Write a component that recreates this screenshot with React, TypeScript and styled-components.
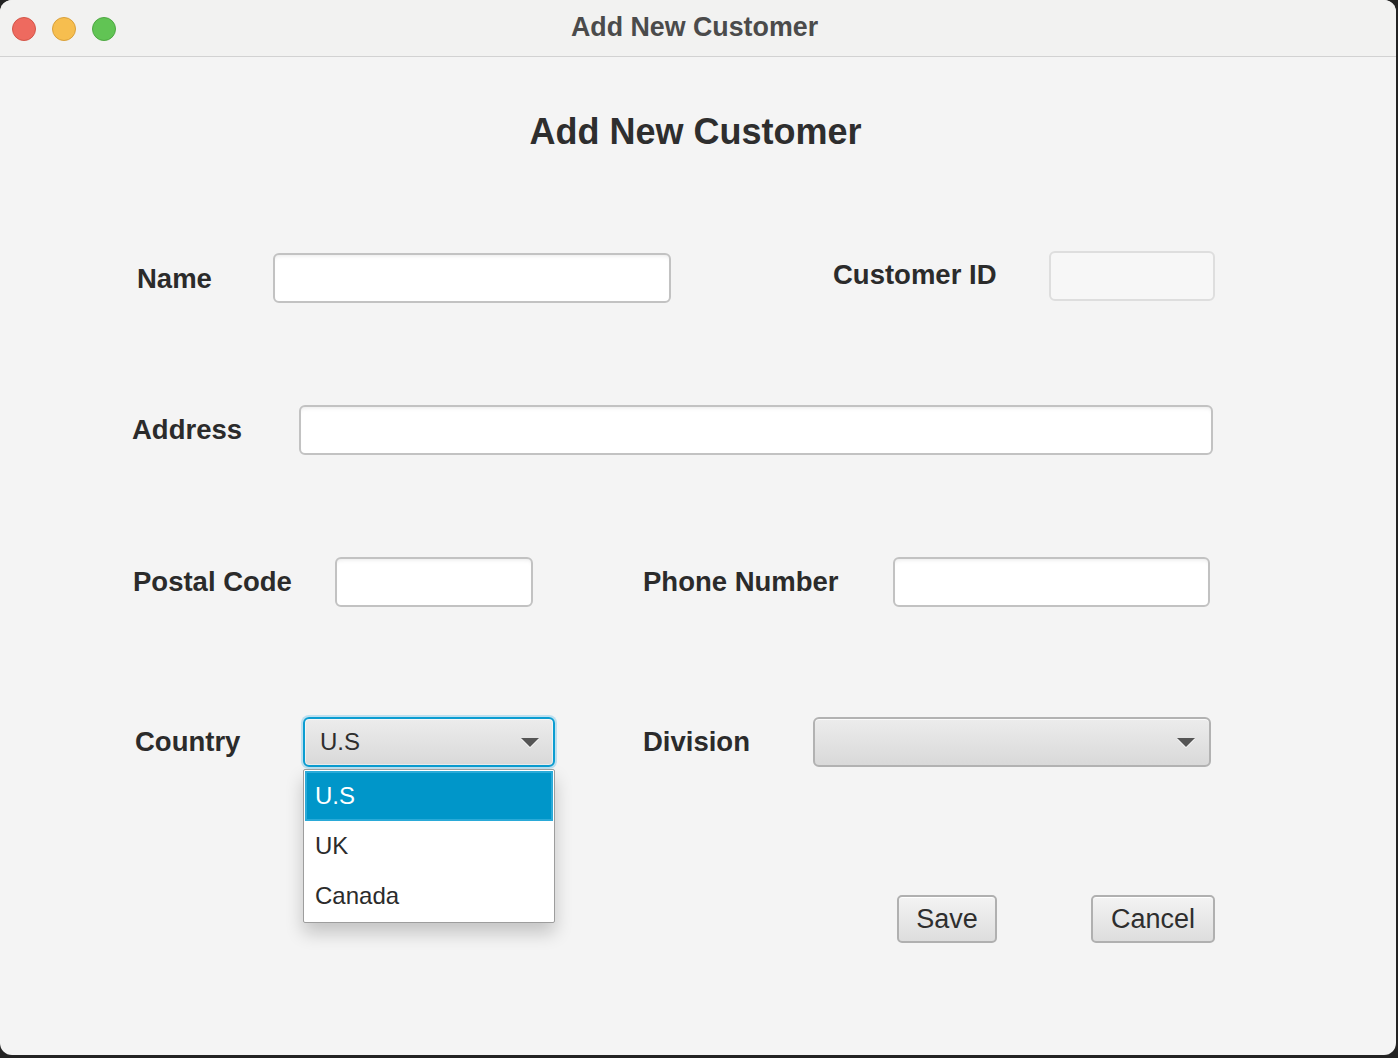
import React from "react";
import styled, { createGlobalStyle } from "styled-components";

const Global = createGlobalStyle`
  html, body { margin: 0; padding: 0; background: #232323; }
  body { width: 1398px; height: 1058px; overflow: hidden; font-family: "Liberation Sans", Arial, sans-serif; }
  * { box-sizing: border-box; }
`;

const Window = styled.div`
  width: 1396px;
  height: 1055px;
  background: #f4f4f4;
  border-radius: 12px;
  overflow: hidden;
  display: flex;
  flex-direction: column;
`;

const TitleBar = styled.div`
  height: 57px;
  flex: none;
  background: #f2f2f1;
  border-bottom: 1px solid #d2d2d2;
  display: flex;
  align-items: center;
  position: relative;
`;

const Lights = styled.div`
  display: flex;
  gap: 16px;
  padding-left: 12px;
  margin-top: 1px;
`;

const Light = styled.span<{ $c: string; $b: string }>`
  width: 24px;
  height: 24px;
  border-radius: 50%;
  background: ${(p) => p.$c};
  border: 1px solid ${(p) => p.$b};
`;

const WinTitle = styled.div`
  position: absolute;
  left: 0;
  right: 0;
  top: 0;
  height: 54px;
  display: flex;
  align-items: center;
  justify-content: center;
  font-weight: 700;
  font-size: 26.8px;
  color: #4b4b4b;
  padding-right: 7px;
  pointer-events: none;
`;

const Content = styled.div`
  flex: 1;
  display: flex;
  flex-direction: column;
  padding-top: 53px;
  position: relative;
`;

const Heading = styled.h1`
  margin: 0;
  height: 44px;
  line-height: 44px;
  text-align: center;
  font-size: 36px;
  font-weight: 700;
  color: #2e2e2e;
  padding-right: 5px;
`;

const Row = styled.div<{ $top: number; $h: number }>`
  display: flex;
  align-items: center;
  margin-top: ${(p) => p.$top}px;
  height: ${(p) => p.$h}px;
`;

const Label = styled.div<{ $ml: number; $w: number; $dy?: number }>`
  margin-left: ${(p) => p.$ml}px;
  width: ${(p) => p.$w}px;
  flex: none;
  font-size: 27.5px;
  font-weight: 700;
  color: #2b2b2b;
  line-height: 32px;
  transform: translateY(${(p) => p.$dy ?? 0}px);
`;

const Field = styled.div<{ $w: number; $disabled?: boolean; $dy?: number }>`
  width: ${(p) => p.$w}px;
  height: 50px;
  flex: none;
  border-radius: 6px;
  border: 2px solid ${(p) => (p.$disabled ? "#dedede" : "#c2c2c2")};
  background: ${(p) => (p.$disabled ? "#f7f7f7" : "#ffffff")};
  box-shadow: ${(p) =>
    p.$disabled ? "none" : "inset 0 4px 4px -3px rgba(0,0,0,0.09)"};
  transform: translateY(${(p) => p.$dy ?? 0}px);
`;

const ComboWrap = styled.div<{ $w: number }>`
  position: relative;
  width: ${(p) => p.$w}px;
  height: 50px;
  flex: none;
`;

const Combo = styled.div<{ $focused?: boolean }>`
  width: 100%;
  height: 100%;
  border-radius: 6px;
  border: 2px solid ${(p) => (p.$focused ? "#0b9dd1" : "#b2b2b2")};
  box-shadow: ${(p) =>
    p.$focused
      ? "0 0 0 2px rgba(120,200,235,0.45), inset 0 0 0 1px rgba(255,255,255,0.5)"
      : "inset 0 1px 0 #fafafa"};
  background: linear-gradient(#ececec, #d9d9d9);
  display: flex;
  align-items: center;
  padding: 0 14px 0 15px;
`;

const ComboText = styled.span`
  flex: 1;
  font-size: 24px;
  color: #2e2e2e;
`;

const Arrow = styled.span`
  width: 0;
  height: 0;
  border-left: 9px solid transparent;
  border-right: 9px solid transparent;
  border-top: 9px solid #555555;
  filter: drop-shadow(0 1px 0 #ffffff);
  margin-top: 1px;
`;

const Popup = styled.ul`
  position: absolute;
  left: 0;
  top: 52px;
  width: 252px;
  margin: 0;
  padding: 1px;
  list-style: none;
  background: #ffffff;
  border: 1px solid #9d9d9d;
  border-radius: 2px;
  box-shadow: 0 10px 18px rgba(0,0,0,0.2);
  z-index: 5;
`;

const Item = styled.li<{ $sel?: boolean }>`
  height: 50px;
  display: flex;
  align-items: center;
  padding-left: 10px;
  font-size: 24px;
  color: ${(p) => (p.$sel ? "#ffffff" : "#2b2b2b")};
  background: ${(p) => (p.$sel ? "#0096c9" : "transparent")};
  box-shadow: ${(p) => (p.$sel ? "inset 0 0 0 2px #2aaad8" : "none")};
`;

const Button = styled.div<{ $ml: number; $w: number }>`
  margin-left: ${(p) => p.$ml}px;
  width: ${(p) => p.$w}px;
  height: 48px;
  flex: none;
  border-radius: 5px;
  border: 2px solid #b0b0b0;
  background: linear-gradient(#f3f3f3, #dddddd);
  box-shadow: inset 0 1px 0 #ffffff;
  display: flex;
  align-items: center;
  justify-content: center;
  font-size: 27px;
  color: #2e2e2e;
`;

export default function App() {
  return (
    <>
      <Global />
      <Window>
        <TitleBar>
          <Lights>
            <Light $c="#ee6a5f" $b="#d35548" />
            <Light $c="#f6be4f" $b="#d9a03a" />
            <Light $c="#61c454" $b="#4ea842" />
          </Lights>
          <WinTitle>Add New Customer</WinTitle>
        </TitleBar>
        <Content>
          <Heading>Add New Customer</Heading>

          <Row $top={97} $h={52}>
            <Label $ml={137} $w={136} $dy={2}>Name</Label>
            <Field $w={398} $dy={1} />
            <Label $ml={162} $w={216} $dy={-2}>Customer ID</Label>
            <Field $w={166} $disabled $dy={-1} />
          </Row>

          <Row $top={102} $h={50}>
            <Label $ml={132} $w={167}>Address</Label>
            <Field $w={914} />
          </Row>

          <Row $top={102} $h={50}>
            <Label $ml={133} $w={202}>Postal Code</Label>
            <Field $w={198} />
            <Label $ml={110} $w={250}>Phone Number</Label>
            <Field $w={317} />
          </Row>

          <Row $top={110} $h={50}>
            <Label $ml={135} $w={168}>Country</Label>
            <ComboWrap $w={252}>
              <Combo $focused>
                <ComboText>U.S</ComboText>
                <Arrow />
              </Combo>
              <Popup>
                <Item $sel>U.S</Item>
                <Item>UK</Item>
                <Item>Canada</Item>
              </Popup>
            </ComboWrap>
            <Label $ml={88} $w={170}>Division</Label>
            <ComboWrap $w={398}>
              <Combo>
                <ComboText />
                <Arrow />
              </Combo>
            </ComboWrap>
          </Row>

          <Row $top={128} $h={48}>
            <Button $ml={897} $w={100}>Save</Button>
            <Button $ml={94} $w={124}>Cancel</Button>
          </Row>
        </Content>
      </Window>
    </>
  );
}
